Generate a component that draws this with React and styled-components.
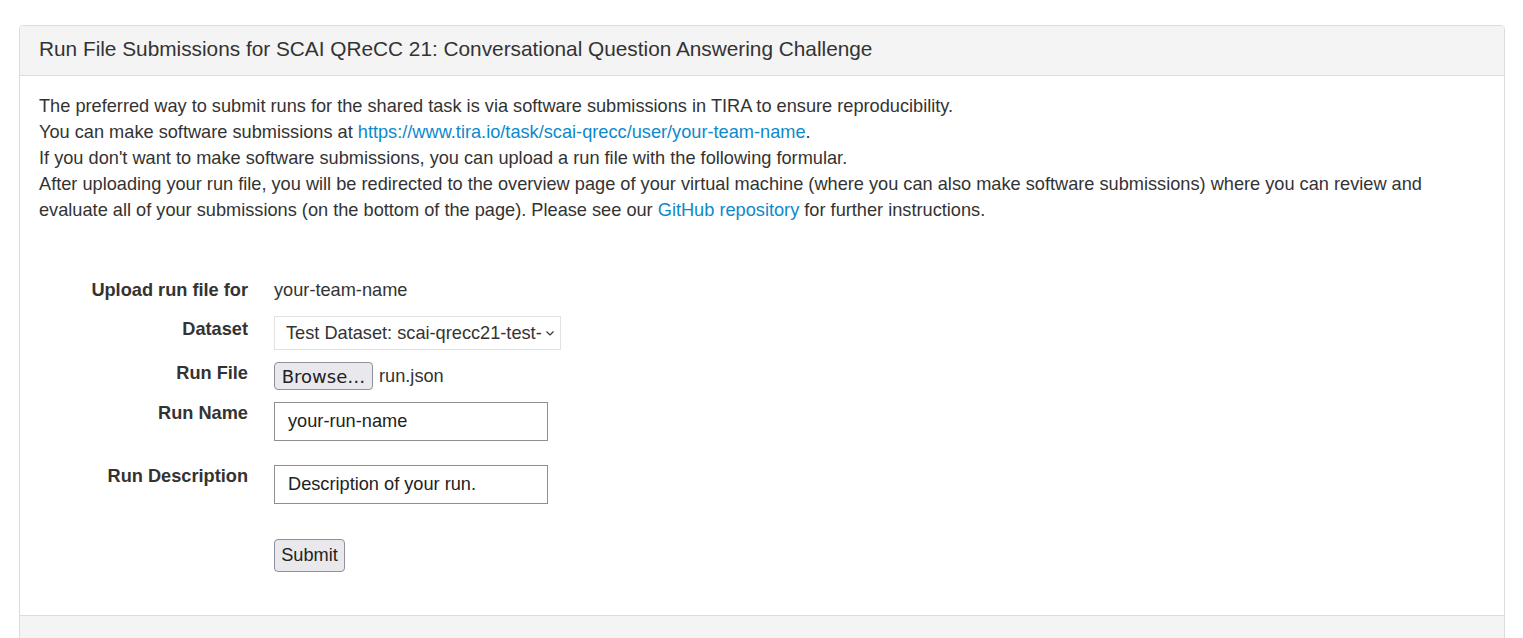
import React from 'react'
import styled, { createGlobalStyle } from 'styled-components';

const GlobalStyle = createGlobalStyle`
  body {
    margin: 0;
    font-family: "Liberation Sans", Arial, sans-serif;
    font-size: 18.2px;
    color: #333;
    background: #fff;
  }
`;

const App = () => {
    return (
        <Page>
            <GlobalStyle />
            <Card>
                <CardHeader>Run File Submissions for SCAI QReCC 21: Conversational Question Answering Challenge</CardHeader>
                <CardBody>
                    <Intro>
                        The preferred way to submit runs for the shared task is via software submissions in TIRA to ensure reproducibility.<br />
                        You can make software submissions at <Link href="#">https://www.tira.io/task/scai-qrecc/user/your-team-name</Link>.<br />
                        If you don't want to make software submissions, you can upload a run file with the following formular.<br />
                        After uploading your run file, you will be redirected to the overview page of your virtual machine (where you can also make software submissions) where you can review and evaluate all of your submissions (on the bottom of the page). Please see our <Link href="#">GitHub repository</Link> for further instructions.
                    </Intro>
                    <Form onSubmit={e => e.preventDefault()}>
                        <Row $top={54} $align="center">
                            <Label>Upload run file for</Label>
                            <Value>your-team-name</Value>
                        </Row>
                        <Row $top={13} $align="center">
                            <Label $shift={-4}>Dataset</Label>
                            <SelectBox>
                                <span>Test Dataset: scai-qrecc21-test-dataset</span>
                                <svg width="10" height="10" viewBox="0 0 10 10">
                                    <path d="M1.5 3.5 L5 7 L8.5 3.5" fill="none" stroke="#333" strokeWidth="1.2" />
                                </svg>
                            </SelectBox>
                        </Row>
                        <Row $top={12} $align="center">
                            <Label $shift={-3}>Run File</Label>
                            <FileWrap>
                                <GrayButton type="button" $w={99} $h={28} $font='"DejaVu Sans", sans-serif' $size={18}>Browse…</GrayButton>
                                <span>run.json</span>
                            </FileWrap>
                        </Row>
                        <Row $top={12} $align="start">
                            <Label $shift={-2}>Run Name</Label>
                            <TextInput defaultValue="your-run-name" />
                        </Row>
                        <Row $top={24} $align="start">
                            <Label $shift={-2}>Run Description</Label>
                            <TextInput defaultValue="Description of your run." />
                        </Row>
                        <Row $top={35} $align="start">
                            <span />
                            <GrayButton type="submit" $w={71} $h={33}>Submit</GrayButton>
                        </Row>
                    </Form>
                </CardBody>
                <CardFooter />
            </Card>
        </Page>
    );
};

const Page = styled.div`
  padding: 25px 18px 0 19px;
  height: 638px;
  box-sizing: border-box;
  overflow: hidden;
`;

const Card = styled.div`
  border: 1px solid #dcdcdc;
  border-radius: 4px;
  overflow: hidden;
`;

const CardHeader = styled.div`
  background: #f4f4f4;
  border-bottom: 1px solid #dcdcdc;
  padding: 0 19px;
  height: 49px;
  line-height: 45px;
  font-size: 20.8px;
  color: #333;
`;

const CardBody = styled.div`
  padding: 17px 19px 43px 19px;
`;

const Intro = styled.p`
  margin: 0;
  line-height: 26px;
`;

const Link = styled.a`
  color: #0d89cc;
  text-decoration: none;
`;

const Form = styled.form`
  display: flex;
  flex-direction: column;
`;

const Row = styled.div`
  display: grid;
  grid-template-columns: 209px 1fr;
  column-gap: 26px;
  align-items: ${p => p.$align};
  margin-top: ${p => p.$top}px;
`;

const Label = styled.label`
  text-align: right;
  font-weight: bold;
  line-height: 26px;
  white-space: nowrap;
  position: relative;
  top: ${p => p.$shift || 0}px;
`;

const Value = styled.span`
  line-height: 26px;
`;

const SelectBox = styled.div`
  width: 287px;
  height: 34px;
  box-sizing: border-box;
  border: 1px solid #e2e2e2;
  background: #fff;
  display: flex;
  align-items: center;
  padding: 0 5px 0 11px;
  gap: 3px;

  span {
    flex: 1;
    white-space: nowrap;
    overflow: hidden;
    text-overflow: clip;
  }
  svg {
    flex: none;
  }
`;

const FileWrap = styled.div`
  display: flex;
  align-items: center;
  gap: 6px;
`;

const GrayButton = styled.button`
  width: ${p => p.$w}px;
  height: ${p => p.$h}px;
  padding: 0;
  background: #e9e9ed;
  border: 1px solid #8f8f9d;
  border-radius: 4px;
  font-family: ${p => p.$font || '"Liberation Sans", Arial, sans-serif'};
  font-size: ${p => p.$size || 18.2}px;
  color: #222;
  cursor: pointer;
  white-space: nowrap;
`;

const TextInput = styled.input`
  width: 274px;
  height: 39px;
  box-sizing: border-box;
  border: 1px solid #8f8f8f;
  padding: 0 13px;
  font-family: "Liberation Sans", Arial, sans-serif;
  font-size: 18.2px;
  color: #222;
  outline: none;
`;

const CardFooter = styled.div`
  background: #f4f4f4;
  border-top: 1px solid #dcdcdc;
  height: 60px;
`;

export default App
